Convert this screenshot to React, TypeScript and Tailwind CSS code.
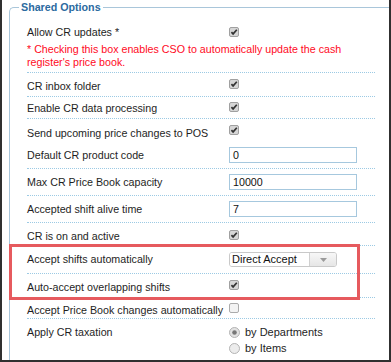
import React from "react";

function Check({ checked = true }: { checked?: boolean }) {
  return (
    <svg width="10" height="10" viewBox="0 0 10 10" className="block">
      <rect
        x="0.5"
        y="0.5"
        width="9"
        height="9"
        rx="1.5"
        fill={checked ? "#d6d6d6" : "#f3f3f3"}
        stroke={checked ? "#a0a0a0" : "#ababab"}
      />
      {checked && (
        <path d="M2.4 5.1 L4.1 6.9 L7.8 2.7" fill="none" stroke="#333" strokeWidth="1.7" />
      )}
    </svg>
  );
}

function Radio({ checked = false }: { checked?: boolean }) {
  return (
    <svg width="11" height="11" viewBox="0 0 11 11" className="block">
      <circle cx="5.5" cy="5.5" r="5" fill={checked ? "#e2e2e2" : "#ececec"} stroke="#b3b3b3" />
      {checked && <circle cx="5.5" cy="5.5" r="2.3" fill="#777" />}
    </svg>
  );
}

function TextInput({ value }: { value: string }) {
  return (
    <div className="w-[128px] h-[16px] border border-[#a6c8de] bg-white pl-[3px] leading-[14px] text-[#111]">
      {value}
    </div>
  );
}

export default function App() {
  return (
    <div className="relative w-[391px] h-[362px] bg-white border-l-2 border-r-2 border-b-2 border-[#303030] font-['Liberation_Sans',Arial,sans-serif] text-[10.7px] text-[#1e1e1e] overflow-hidden">
      <fieldset className="ml-[7px] h-full border-t border-l border-r-0 border-b-0 border-[#a9c6da] rounded-tl-[5px]">
        <legend className="ml-[9px] px-[2px] leading-[14px] text-[#2b6aa0] font-bold">
          Shared Options
        </legend>
        <div className="pt-[6px] pl-[17px]">
          <div className="w-[348px]">
            {/* Row 1 */}
            <div className="h-[53px] border-b border-dotted border-[#9ccae4]">
              <div className="flex">
                <div className="w-[202px] pt-[6px] leading-[13px]">Allow CR updates *</div>
                <div className="pt-[7px]">
                  <Check />
                </div>
              </div>
              <div className="mt-[4px] leading-[12.5px] text-[#ff0a1e]">
                * Checking this box enables CSO to automatically update the cash
                <br />
                register's price book.
              </div>
            </div>
            {/* CR inbox folder */}
            <div className="flex h-[24px] border-b border-dotted border-[#9ccae4]">
              <div className="w-[202px] pt-[7px] leading-[13px]">CR inbox folder</div>
              <div className="pt-[6px]">
                <Check />
              </div>
            </div>
            {/* Enable */}
            <div className="flex h-[22px] border-b border-dotted border-[#9ccae4]">
              <div className="w-[202px] pt-[5px] leading-[13px]">Enable CR data processing</div>
              <div className="pt-[5px]">
                <Check />
              </div>
            </div>
            {/* Send */}
            <div className="flex h-[23px]">
              <div className="w-[202px] pt-[7.5px] leading-[13px] whitespace-nowrap">
                Send upcoming price changes to POS
              </div>
              <div className="pt-[6px]">
                <Check />
              </div>
            </div>
            {/* Default */}
            <div className="flex h-[27px] border-b border-dotted border-[#9ccae4]">
              <div className="w-[202px] pt-[6.5px] leading-[13px]">Default CR product code</div>
              <div className="pt-[5px]">
                <TextInput value="0" />
              </div>
            </div>
            {/* Max */}
            <div className="flex h-[27px] border-b border-dotted border-[#9ccae4]">
              <div className="w-[202px] pt-[6.5px] leading-[13px]">Max CR Price Book capacity</div>
              <div className="pt-[5px]">
                <TextInput value="10000" />
              </div>
            </div>
            {/* Accepted shift */}
            <div className="flex h-[27px] border-b border-dotted border-[#9ccae4]">
              <div className="w-[202px] pt-[6.5px] leading-[13px]">Accepted shift alive time</div>
              <div className="pt-[5px]">
                <TextInput value="7" />
              </div>
            </div>
            {/* CR is on */}
            <div className="flex h-[23px] border-b border-dotted border-[#9ccae4]">
              <div className="w-[202px] pt-[6.5px] leading-[13px]">CR is on and active</div>
              <div className="pt-[7px]">
                <Check />
              </div>
            </div>
            {/* Accept shifts */}
            <div className="flex h-[28px] border-b border-dotted border-[#9ccae4]">
              <div className="w-[202px] pt-[6.5px] leading-[13px]">Accept shifts automatically</div>
              <div className="pt-[6px]">
                <div className="flex w-[108px] h-[15px] rounded-[3px] border border-[#c9c9c9] overflow-hidden">
                  <div className="flex-1 bg-white pl-[2px] leading-[13px] text-[11px] text-[#111]">
                    Direct Accept
                  </div>
                  <div className="w-[27px] border-l border-[#d0d0d0] bg-gradient-to-b from-[#f7f7f7] to-[#e6e6e6] flex items-center justify-center">
                    <svg width="7" height="4" viewBox="0 0 7 4">
                      <path d="M0 0 H7 L3.5 4 Z" fill="#9a9a9a" />
                    </svg>
                  </div>
                </div>
              </div>
            </div>
            {/* Auto-accept */}
            <div className="flex h-[24px] border-b border-dotted border-[#9ccae4]">
              <div className="w-[202px] pt-[6.5px] leading-[13px]">Auto-accept overlapping shifts</div>
              <div className="pt-[6px]">
                <Check />
              </div>
            </div>
            {/* Accept Price Book */}
            <div className="flex h-[21px] border-b border-dotted border-[#9ccae4]">
              <div className="w-[202px] pt-[5.5px] leading-[13px] whitespace-nowrap">
                Accept Price Book changes automatically
              </div>
              <div className="pt-[5px]">
                <Check checked={false} />
              </div>
            </div>
            {/* Apply CR taxation */}
            <div className="flex">
              <div className="w-[202px] pt-[6.5px] leading-[13px]">Apply CR taxation</div>
              <div className="pt-[5px]">
                <div className="flex items-center h-[16px] gap-[5px]">
                  <Radio checked />
                  <span className="text-[11px]">by Departments</span>
                </div>
                <div className="flex items-center h-[16px] gap-[5px]">
                  <Radio />
                  <span className="text-[11px]">by Items</span>
                </div>
              </div>
            </div>
          </div>
        </div>
      </fieldset>
      <div className="absolute left-[7px] top-[244px] w-[351px] h-[56px] border-[3px] border-[#e65a5e] pointer-events-none" />
    </div>
  );
}
